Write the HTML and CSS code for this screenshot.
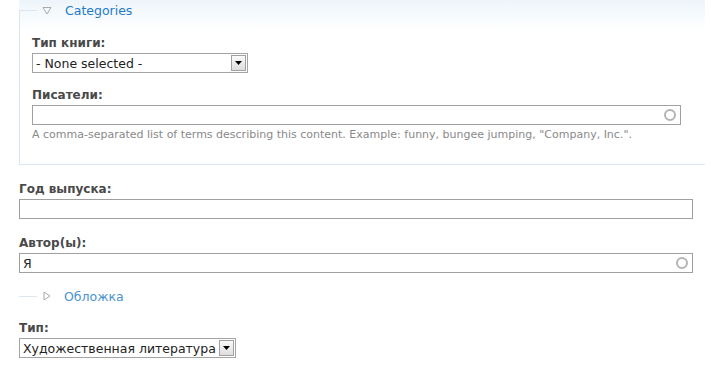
FILE: index.html
```html
<!DOCTYPE html>
<html lang="ru">
<head>
    <meta charset="UTF-8">
    <title>Book form</title>
    <link rel="stylesheet" href="styles.css">
</head>
<body>
    <div class="form">
        <div class="fieldset">
            <div class="legend">
                <span class="rule"></span>
                <svg class="toggle" width="10" height="9" viewBox="0 0 10 9"><polygon points="1,1.5 9,1.5 5,8" fill="none" stroke="#aaa" stroke-width="1"/></svg>
                <a class="legend-link" href="#">Categories</a>
            </div>
            <div class="fieldset-body">
                <div class="form-item">
                    <label>Тип книги:</label>
                    <div class="select select-type">
                        <span class="select-text">- None selected -</span>
                        <span class="select-btn"><svg width="7" height="4" viewBox="0 0 7 4"><polygon points="0,0 7,0 3.5,4" fill="#000"/></svg></span>
                    </div>
                </div>
                <div class="form-item">
                    <label>Писатели:</label>
                    <div class="text-input autocomplete inset"><span class="throbber"></span></div>
                    <div class="description">A comma-separated list of terms describing this content. Example: funny, bungee jumping, "Company, Inc.".</div>
                </div>
            </div>
        </div>

        <div class="form-item outer">
            <label>Год выпуска:</label>
            <div class="text-input wide"></div>
        </div>

        <div class="form-item outer">
            <label>Автор(ы):</label>
            <div class="text-input autocomplete wide"><span class="value">Я</span><span class="throbber"></span></div>
        </div>

        <div class="legend collapsed">
            <span class="rule"></span>
            <svg class="toggle" width="10" height="10" viewBox="0 0 10 10"><polygon points="2,1 8,5 2,9" fill="none" stroke="#aaa" stroke-width="1"/></svg>
            <a class="legend-link" href="#">Обложка</a>
        </div>

        <div class="form-item outer last">
            <label>Тип:</label>
            <div class="select select-kind">
                <span class="select-text">Художественная литература</span>
                <span class="select-btn"><svg width="7" height="4" viewBox="0 0 7 4"><polygon points="0,0 7,0 3.5,4" fill="#000"/></svg></span>
            </div>
        </div>
    </div>
</body>
</html>
```

FILE: styles.css
```css
body {
    margin: 0;
    font-family: "DejaVu Sans", Verdana, sans-serif;
    font-size: 12px;
    color: #494949;
    background: #fff;
}
.form {
    padding: 0 6px 0 19px;
}
.fieldset {
    background: linear-gradient(#edf5fa 0, #fff 30px);
    border-bottom: 1px solid #dce6ee;
}
.legend {
    display: flex;
    align-items: center;
    height: 20px;
}
.legend .rule {
    align-self: flex-start;
    margin-top: 10px;
    width: 17px;
    height: 10px;
    border-top: 1px solid #dce6ee;
    border-left: 1px solid #dce6ee;
}
.legend.collapsed .rule {
    height: 0;
    border-left: none;
    width: 18px;
}
.toggle {
    margin-left: 5px;
}
.legend-link {
    margin-left: 13px;
    color: #1f7bc9;
    text-decoration: none;
    font-size: 12.5px;
}
.collapsed {
    margin-top: 13px;
}
.collapsed .legend-link {
    color: #4a92cf;
    margin-left: 12px;
}
.fieldset-body {
    border-left: 1px solid #dce6ee;
    padding: 15px 0 22px 12px;
}
.form-item {
    margin-bottom: 14px;
}
.fieldset-body .form-item:last-child {
    margin-bottom: 0;
}
.form-item.outer {
    margin-top: 16px;
    margin-bottom: 0;
    margin-right: 12px;
}
.form-item.last {
    margin-top: 14px;
}
label {
    display: block;
    font-weight: bold;
    line-height: 16px;
    margin-bottom: 2px;
}
.select {
    display: flex;
    align-items: center;
    justify-content: space-between;
    box-sizing: border-box;
    height: 20px;
    border: 1px solid #a4a4a4;
    background: #fff;
    color: #222;
    font-size: 12.5px;
    padding: 0 1px 0 3px;
}
.select-type {
    width: 216px;
}
.select-kind {
    width: 217px;
}
.select-btn {
    display: flex;
    align-items: center;
    justify-content: center;
    box-sizing: border-box;
    width: 15px;
    height: 16px;
    border: 1px solid #a0a0a0;
    background: linear-gradient(#fafafa, #dedede);
}
.text-input {
    display: flex;
    align-items: center;
    box-sizing: border-box;
    height: 20px;
    border: 1px solid #a0a0a0;
    background: #fff;
    color: #222;
    padding: 0 3px;
}
.inset {
    width: 649px;
}
.throbber {
    margin-left: auto;
    margin-right: 1px;
    width: 8px;
    height: 8px;
    border: 2px solid #b4b4b4;
    border-radius: 50%;
}
.value {
    font-size: 12.5px;
}
.description {
    margin-top: 3px;
    font-size: 11px;
    line-height: 14px;
    color: #898989;
}
```
